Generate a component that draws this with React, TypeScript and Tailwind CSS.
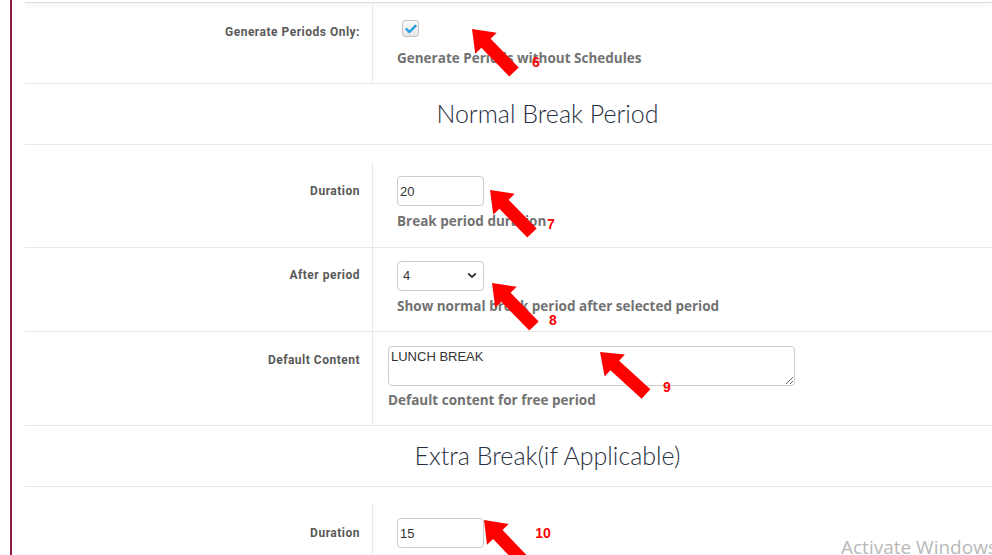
import type { ReactNode } from 'react';

const labelFont = { fontFamily: 'Roboto, "Liberation Sans", Arial, sans-serif' };
const helpFont = { fontFamily: '"Open Sans", Lato, "Liberation Sans", sans-serif' };
const headFont = { fontFamily: 'Lato, "Open Sans", sans-serif' };
const inputFont = { fontFamily: '"Liberation Sans", Arial, sans-serif' };

type Arrow = { tip: [number, number]; tail: [number, number] };

// red annotation arrows drawn over the screenshot
const arrows: Arrow[] = [
  { tip: [472, 29], tail: [514, 72] },
  { tip: [490, 190], tail: [532, 233] },
  { tip: [492, 283], tail: [534, 326] },
  { tip: [600, 352], tail: [646, 394] },
  { tip: [484, 520], tail: [528, 566] },
];

const marks = [
  { n: '6', x: 536, y: 67 },
  { n: '7', x: 551, y: 229 },
  { n: '8', x: 553, y: 325 },
  { n: '9', x: 667, y: 392 },
  { n: '10', x: 543, y: 538 },
];

function arrowPoints({ tip, tail }: Arrow) {
  const dx = tip[0] - tail[0];
  const dy = tip[1] - tail[1];
  const len = Math.hypot(dx, dy);
  const ux = dx / len;
  const uy = dy / len;
  const nx = -uy;
  const ny = ux;
  const headLen = 20;
  const headW = 15;
  const shaftW = 6.5;
  const bx = tip[0] - ux * headLen;
  const by = tip[1] - uy * headLen;
  const pts = [
    [tip[0], tip[1]],
    [bx + nx * headW, by + ny * headW],
    [bx + nx * shaftW, by + ny * shaftW],
    [tail[0] + nx * shaftW, tail[1] + ny * shaftW],
    [tail[0] - nx * shaftW, tail[1] - ny * shaftW],
    [bx - nx * shaftW, by - ny * shaftW],
    [bx - nx * headW, by - ny * headW],
  ];
  return pts.map((p) => p.join(',')).join(' ');
}

function Row({
  label,
  height,
  labelTop,
  children,
  contentClass,
}: {
  label: string;
  height: string;
  labelTop: string;
  children: ReactNode;
  contentClass: string;
}) {
  return (
    <div className={`grid grid-cols-[348px_1fr] border-b border-[#e8e8e8] ${height}`}>
      <div
        className={`border-r border-[#e8e8e8] pr-[12px] text-right text-[12px] leading-[14px] font-bold tracking-[0.5px] text-[#595959] ${labelTop}`}
        style={labelFont}
      >
        {label}
      </div>
      <div className={contentClass}>{children}</div>
    </div>
  );
}

function Help({ children, className }: { children: ReactNode; className: string }) {
  return (
    <p className={`text-[13.5px] leading-[16px] font-bold text-[#727272] ${className}`} style={helpFont}>
      {children}
    </p>
  );
}

function Heading({ children }: { children: ReactNode }) {
  return (
    <div className="flex h-[61px] items-center justify-center border-b border-[#e8e8e8] pb-[1px] pl-[78px]">
      <h2 className="text-[25px] font-light text-[#27303f]" style={headFont}>
        {children}
      </h2>
    </div>
  );
}

function NumberBox({ value }: { value: string }) {
  return (
    <input
      type="text"
      defaultValue={value}
      className="block h-[30px] w-[87px] rounded-[4px] border border-[#ccc] bg-white px-[2px] text-[13px] text-[#333] outline-none"
      style={inputFont}
    />
  );
}

export default function App() {
  return (
    <div className="relative h-[555px] w-[992px] overflow-hidden bg-white">
      <div className="flex h-full">
        <div className="w-[10px] shrink-0" />
        <div className="w-[2px] shrink-0 bg-[#8e1a45]" />
        <div className="w-[13px] shrink-0" />
        <div className="min-w-0 flex-1">
          <div className="h-[3px] border-b border-[#dcdcdc] shadow-[0_2px_4px_rgba(0,0,0,0.06)]" />

          <Row label="Generate Periods Only:" height="h-[81px]" labelTop="pt-[22px]" contentClass="pl-[29px] pt-[17px]">
            <div className="flex h-[17px] w-[17px] items-center justify-center rounded-[3px] border border-[#c4c4c4] bg-gradient-to-b from-[#fbfbfb] to-[#e6e6e6]">
              <svg width="12" height="10" viewBox="0 0 12 10">
                <path d="M1.5 5.2 L4.5 8 L10.5 1.8" fill="none" stroke="#2a9ce0" strokeWidth="2.4" strokeLinecap="round" strokeLinejoin="round" />
              </svg>
            </div>
            <Help className="-ml-[5px] mt-[13px]">Generate Periods without Schedules</Help>
          </Row>

          <Heading>Normal Break Period</Heading>
          <div className="h-[17px]" />

          <Row label="Duration" height="h-[86px]" labelTop="pt-[22px]" contentClass="pl-[24px] pt-[14px]">
            <NumberBox value="20" />
            <Help className="mt-[7px]">Break period duration</Help>
          </Row>

          <Row label="After period" height="h-[84px]" labelTop="pt-[20px]" contentClass="pl-[24px] pt-[13px]">
            <div className="relative h-[30px] w-[87px]">
              <select
                defaultValue="4"
                className="block h-[30px] w-[87px] appearance-none rounded-[4px] border border-[#ccc] bg-white pl-[5px] text-[13px] text-[#333] outline-none"
                style={inputFont}
              >
                {[1, 2, 3, 4, 5, 6, 7, 8].map((n) => (
                  <option key={n} value={String(n)}>
                    {n}
                  </option>
                ))}
              </select>
              <svg className="pointer-events-none absolute right-[7px] top-[11px]" width="10" height="7" viewBox="0 0 10 7">
                <path d="M1.2 1.5 L5 5 L8.8 1.5" fill="none" stroke="#333" strokeWidth="1.8" />
              </svg>
            </div>
            <Help className="mt-[7px]">Show normal break period after selected period</Help>
          </Row>

          <Row label="Default Content" height="h-[94px]" labelTop="pt-[21px]" contentClass="pl-[15px] pt-[14px]">
            <textarea
              defaultValue="LUNCH BREAK"
              className="block h-[40px] w-[407px] rounded-[4px] border border-[#ccc] bg-white px-[2px] pt-[2px] text-[13px] leading-[15px] text-[#333] outline-none"
              style={inputFont}
            />
            <Help className="mt-[6px]">Default content for free period</Help>
          </Row>

          <Heading>Extra Break(if Applicable)</Heading>
          <div className="h-[17px]" />

          <Row label="Duration" height="h-[86px]" labelTop="pt-[22px]" contentClass="pl-[24px] pt-[14px]">
            <NumberBox value="15" />
          </Row>
        </div>
      </div>

      <svg className="pointer-events-none absolute left-0 top-0" width="992" height="555">
        {arrows.map((a, i) => (
          <polygon key={i} points={arrowPoints(a)} fill="#ff0000" />
        ))}
        {marks.map((m) => (
          <text
            key={m.n}
            x={m.x}
            y={m.y}
            textAnchor="middle"
            fill="#ff0000"
            fontSize="14"
            fontWeight="bold"
            fontFamily="'Liberation Sans', Arial, sans-serif"
          >
            {m.n}
          </text>
        ))}
      </svg>

      <div
        className="pointer-events-none absolute left-[841px] top-[535px] whitespace-nowrap text-[19px] leading-[24px] text-[#b8b8b8]"
        style={{ fontFamily: '"Open Sans", "Noto Sans", sans-serif' }}
      >
        Activate Windows
      </div>
    </div>
  );
}
